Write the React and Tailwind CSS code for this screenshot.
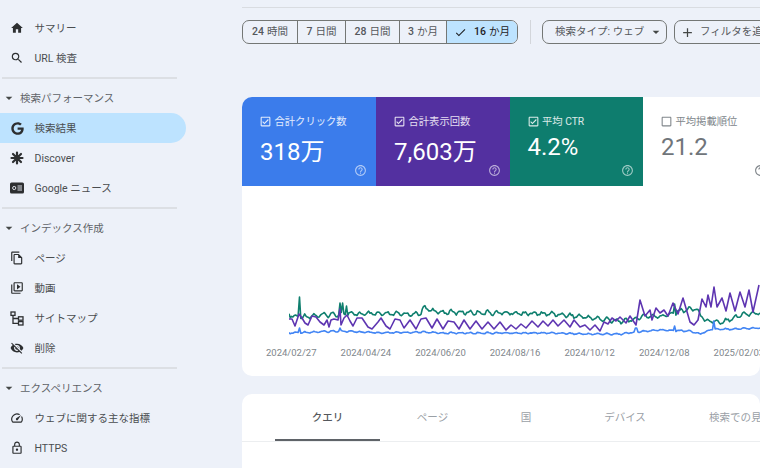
import {
  MdHome,
  MdSearch,
  MdOutlineFileCopy,
  MdOutlineVideoLibrary,
  MdVisibilityOff,
  MdOutlineSpeed,
  MdOutlineLock,
  MdArrowDropDown,
  MdCheck,
  MdAdd,
  MdHelpOutline,
  MdOutlineCheckBox,
  MdCheckBoxOutlineBlank,
} from "react-icons/md";
import { FaGoogle } from "react-icons/fa";

function DiscoverIcon() {
  return (
    <svg width="14" height="14" viewBox="0 0 14 14" fill="none" stroke="currentColor" strokeWidth="2.2" strokeLinecap="round">
      <path d="M7 1.5v11M1.5 7h11M3 3l8 8M11 3l-8 8" />
    </svg>
  );
}

function NewsIcon() {
  return (
    <svg width="14" height="12" viewBox="0 0 14 12">
      <rect width="14" height="11" y="0.5" rx="1.5" fill="currentColor" />
      <circle cx="4.2" cy="6" r="1.6" fill="none" stroke="#edf1f9" strokeWidth="0.9" />
      <path d="M7.5 4h4.5M7.5 6h4.5M7.5 8h4.5" stroke="#edf1f9" strokeWidth="0.9" />
    </svg>
  );
}

function SitemapIcon() {
  return (
    <svg width="14" height="15" viewBox="0 0 14 15" fill="none" stroke="currentColor" strokeWidth="1.3">
      <rect x="1" y="1" width="4" height="3.4" />
      <rect x="8.5" y="5.8" width="4.5" height="3.4" />
      <rect x="8.5" y="10.6" width="4.5" height="3.4" />
      <path d="M3 4.4v8h5.5M3 7.5h5.5" />
    </svg>
  );
}

const lerp = (keys, x) => {
  for (let i = 1; i < keys.length; i++) {
    if (x <= keys[i][0]) {
      const [x0, y0] = keys[i - 1];
      const [x1, y1] = keys[i];
      return y0 + ((y1 - y0) * (x - x0)) / (x1 - x0);
    }
  }
  return keys[keys.length - 1][1];
};

const noise = (i) => {
  const n = Math.sin(i * 12.9898) * 43758.5453;
  return (n - Math.floor(n)) * 2 - 1;
};

// daily series: envelope + weekly wobble + noise + a few spikes
function series(keys, amp, jitter, spikes) {
  const pts = [];
  for (let i = 0; i < 362; i++) {
    const x = 289 + i * 1.307;
    let y = lerp(keys, x) + amp * Math.sin((i / 7) * Math.PI * 2) + jitter * noise(i);
    for (const [sx, sy] of spikes) {
      if (Math.abs(x - sx) < 0.7) y = sy;
    }
    pts.push(x.toFixed(1) + "," + y.toFixed(1));
  }
  return pts.join(" ");
}

const greenLine = series(
  [[289, 315], [296, 317], [340, 314], [370, 314], [420, 314], [425, 307], [435, 312], [510, 313], [555, 314], [585, 317], [600, 319], [620, 321], [632, 320], [645, 316], [660, 317], [680, 311], [695, 308], [705, 320], [722, 322], [735, 317], [745, 314], [760, 313]],
  1.8,
  1.2,
  [[299, 297], [340, 303], [343, 303], [346, 306], [675, 304]]
);

const blueLine = series(
  [[289, 333], [340, 331], [380, 333], [425, 332], [440, 333], [510, 333], [555, 333], [585, 334], [620, 334], [636, 332], [660, 330], [690, 331], [700, 334], [712, 329], [730, 329], [760, 328]],
  0.6,
  0.4,
  [[299, 328], [340, 328], [636, 328], [674, 326], [714, 321]]
);

const purpleLine =
  "289,319 292,319 295,326 299,314 302,318 305,323 308,325 312,316 316,317 320,322 324,325 327,320 329,327 331,320 334,319 338,320 340,309 341,325 344,318 347,315 350,321 353,326 357,318 362,318 368,327 372,329 378,322 381,318 386,326 390,329 395,319 400,320 404,328 410,320 416,329 421,319 426,318 432,328 437,319 443,329 448,321 454,322 459,329 464,320 470,329 476,321 482,329 488,322 494,329 500,322 506,330 511,325 516,329 521,324 526,328 532,321 538,327 543,321 548,326 553,320 558,326 564,320 570,327 574,320 580,327 585,325 590,330 595,325 600,331 604,322 608,324 612,318 616,321 620,317 626,323 630,316 636,325 640,300 645,316 650,310 652,320 656,308 660,313 664,310 668,316 673,303 678,314 683,298 690,322 694,325 698,320 702,299 706,307 708,295 711,307 714,287 717,307 722,298 726,311 730,293 735,311 740,292 745,307 749,290 753,312 759,285";

function NavItem({ icon, label, active }) {
  return (
    <div className={`flex h-[30px] w-[186px] items-center rounded-r-full pl-[10px] text-[10.5px] text-[#4a4d50] ${active ? "bg-[#bde3ff]" : ""}`}>
      <span className="flex w-[14px] justify-center text-[#2d2f31]">{icon}</span>
      <span className="ml-[10.5px] mt-[1px]">{label}</span>
    </div>
  );
}

function NavHeader({ label }) {
  return (
    <div className="flex h-[30px] items-center text-[10.5px] text-[#5f6368]">
      <MdArrowDropDown size={16} className="ml-[1px] text-[#444746]" />
      <span className="ml-[3px] mt-[1px]">{label}</span>
    </div>
  );
}

function Divider() {
  return <div className="mx-[2px] my-[4.25px] h-[1.5px] w-[175px] bg-[#dcdfe4]"></div>;
}

function Sidebar() {
  return (
    <div className="flex w-[242px] shrink-0 flex-col pt-[13px]">
      <NavItem icon={<MdHome size={16} />} label="サマリー" />
      <NavItem icon={<MdSearch size={16} />} label="URL 検査" />
      <Divider />
      <NavHeader label="検索パフォーマンス" />
      <NavItem active icon={<FaGoogle size={13} />} label="検索結果" />
      <NavItem icon={<DiscoverIcon />} label="Discover" />
      <NavItem icon={<NewsIcon />} label="Google ニュース" />
      <Divider />
      <NavHeader label="インデックス作成" />
      <NavItem icon={<MdOutlineFileCopy size={16} />} label="ページ" />
      <NavItem icon={<MdOutlineVideoLibrary size={16} />} label="動画" />
      <NavItem icon={<SitemapIcon />} label="サイトマップ" />
      <NavItem icon={<MdVisibilityOff size={16} />} label="削除" />
      <Divider />
      <NavHeader label="エクスペリエンス" />
      <NavItem icon={<MdOutlineSpeed size={16} />} label="ウェブに関する主な指標" />
      <NavItem icon={<MdOutlineLock size={18} />} label="HTTPS" />
    </div>
  );
}

function Segment({ w, num, unit, active }) {
  return (
    <div className={`flex h-full items-center justify-center gap-[3px] border-l border-[#747775] first:border-l-0 ${w} ${active ? "bg-[#bde3ff] text-[#1f2124]" : ""}`}>
      {active && <MdCheck size={13} className="mr-[4px]" />}
      <span className="font-medium">{num}</span>
      <span>{unit}</span>
    </div>
  );
}

function Toolbar() {
  return (
    <div className="mt-[12px] flex h-[24px] items-center text-[10.5px] text-[#55585c]">
      <div className="flex h-full w-[276px] shrink-0 overflow-hidden rounded-[7px] border border-[#747775]">
        <Segment w="w-[54px]" num="24" unit="時間" />
        <Segment w="w-[48px]" num="7" unit="日間" />
        <Segment w="w-[54px]" num="28" unit="日間" />
        <Segment w="w-[47px]" num="3" unit="か月" />
        <Segment w="flex-1" num="16" unit="か月" active />
      </div>
      <div className="ml-[12px] mr-[11px] h-full w-px shrink-0 bg-[#d3d6db]"></div>
      <div className="flex h-full w-[125px] shrink-0 items-center rounded-[7px] border border-[#747775] pl-[12px]">
        <span>検索タイプ: ウェブ</span>
        <MdArrowDropDown size={16} className="ml-[4px] text-[#444746]" />
      </div>
      <div className="ml-[7px] flex h-full w-[120px] shrink-0 items-center rounded-[7px] border border-[#747775] pl-[5px]">
        <MdAdd size={15} className="text-[#444746]" />
        <span className="ml-[5px] whitespace-nowrap">フィルタを追加</span>
      </div>
    </div>
  );
}

function Metric({ title, value, bg, checked, valueTop }) {
  const Box = checked ? MdOutlineCheckBox : MdCheckBoxOutlineBlank;
  return (
    <div className={`relative h-[89px] shrink-0 pl-[17px] pt-[17px] ${bg} ${checked ? "text-white" : "text-[#70757a]"}`}>
      <div className={`flex items-center text-[10.3px] ${checked ? "text-white/85" : "text-[#80868b]"}`}>
        <Box size={13} />
        <span className="ml-[2.5px]">{title}</span>
      </div>
      <div className={`ml-[1px] text-[24px] leading-[35px] ${valueTop}`}>{value}</div>
      <MdHelpOutline size={13} className={`absolute bottom-[9px] right-[9px] ${checked ? "text-white/60" : "text-[#80868b]"}`} />
    </div>
  );
}

const dates = ["2024/02/27", "2024/04/24", "2024/06/20", "2024/08/16", "2024/10/12", "2024/12/08", "2025/02/03"];

function Chart() {
  return (
    <div className="h-[190px] rounded-b-[10px] bg-white pt-[94px]">
      <svg width="471" height="65" viewBox="289 280 471 65" fill="none" className="ml-[47px] block" strokeWidth="1.6" strokeLinejoin="round">
        <polyline points={greenLine} stroke="#0f7f6e" />
        <polyline points={blueLine} stroke="#4285f4" />
        <polyline points={purpleLine} stroke="#5e35b1" />
      </svg>
      <div className="mt-[1px] flex pl-[24px] text-[9.5px] leading-[14px] text-[#80868b]">
        {dates.map((d) => (
          <span key={d} className="w-[74.6px] shrink-0">{d}</span>
        ))}
      </div>
    </div>
  );
}

function Tabs() {
  return (
    <div className="mt-[18px] h-[74px] rounded-t-[10px] bg-white">
      <div className="flex h-[48px] items-stretch overflow-hidden border-b border-[#eceef0] pl-[33px] text-[10.5px] text-[#9aa0a6]">
        <div className="flex w-[105px] shrink-0 items-center justify-center border-b-2 border-[#5f6368] pt-[2px] font-medium text-[#55585c]">クエリ</div>
        <div className="flex w-[105px] shrink-0 items-center justify-center">ページ</div>
        <div className="flex w-[82px] shrink-0 items-center justify-center">国</div>
        <div className="flex w-[116px] shrink-0 items-center justify-center">デバイス</div>
        <div className="flex shrink-0 items-center whitespace-nowrap pl-[26px]">検索での見え方</div>
      </div>
    </div>
  );
}

export default function App() {
  return (
    <div className="flex h-[468px] w-[760px] overflow-hidden bg-[#edf1f9] font-['Roboto','Noto_Sans_CJK_JP',sans-serif]">
      <Sidebar />
      <div className="flex w-[518px] flex-col pt-[7px]">
        <div className="h-px w-full shrink-0 bg-[#d9dce1]"></div>
        <Toolbar />
        <div className="mt-[53px] flex w-[534px] overflow-hidden rounded-t-[10px]">
          <div className="w-[134px]"><Metric title="合計クリック数" value="318万" bg="bg-[#3b7ceb]" checked valueTop="mt-[6px]" /></div>
          <div className="w-[133.5px]"><Metric title="合計表示回数" value="7,603万" bg="bg-[#5330a0]" checked valueTop="mt-[6px]" /></div>
          <div className="w-[133.5px]"><Metric title="平均 CTR" value="4.2%" bg="bg-[#0e7d6e]" checked valueTop="mt-[1px]" /></div>
          <div className="w-[133px]"><Metric title="平均掲載順位" value="21.2" bg="bg-white" valueTop="mt-[1px]" /></div>
        </div>
        <Chart />
        <Tabs />
      </div>
    </div>
  );
}
